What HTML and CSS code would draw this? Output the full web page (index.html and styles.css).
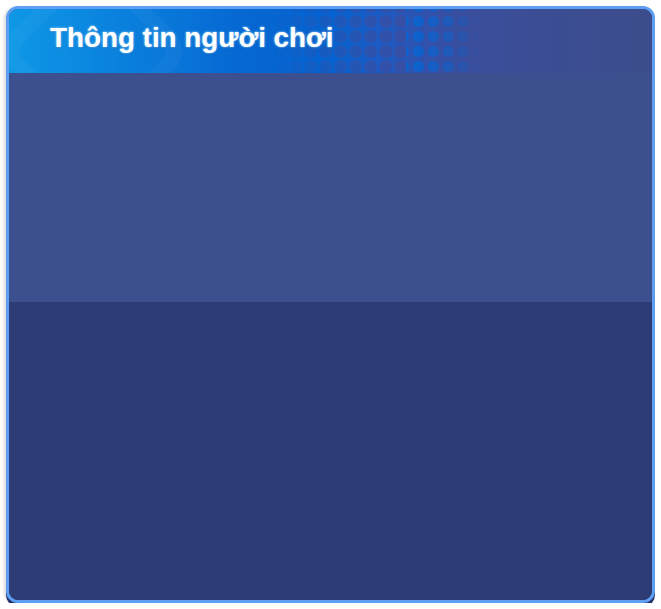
FILE: index.html
```html
<!DOCTYPE html>
<html lang="vi">
<head>
<meta charset="utf-8">
<title>Thông tin người chơi</title>
<link rel="stylesheet" href="styles.css">
</head>
<body>
<div class="panel">
  <div class="panel-header">
    <div class="header-deco"></div>
    <div class="header-dots-a"></div>
    <div class="header-dots-b"></div>
    <h1 class="panel-title">Thông tin người chơi</h1>
  </div>
  <div class="panel-upper"></div>
  <div class="panel-lower"></div>
</div>
</body>
</html>
```
FILE: styles.css
```css
html, body {
  margin: 0;
  padding: 0;
  background: #ffffff;
}
body {
  padding: 6px 6px 0 6px;
}
.panel {
  width: 643px;
  border: 3px solid #5e9ff4;
  border-radius: 12px;
  overflow: hidden;
  background: #2e3c76;
  box-shadow: 0 4px 0 #25316a, -2px 1px 3px rgba(0,0,0,0.15);
  display: flex;
  flex-direction: column;
}
.panel-header {
  position: relative;
  height: 64px;
  overflow: hidden;
  background: linear-gradient(90deg, #0e98e6 0%, #0a82de 16%, #0668d3 36%, #0562d0 50%, #1d5ac4 58%, #3450a8 66%, #3a4e9c 72%, #3b4d92 85%, #3c4c8c 100%);
}
.header-deco {
  position: absolute;
  left: 13px;
  top: -29px;
  width: 110px;
  height: 110px;
  transform: rotate(45deg);
  border-radius: 28px;
  border: 16px solid rgba(255,255,255,0.035);
}
.header-dots-a {
  position: absolute;
  left: 261px;
  top: 0;
  width: 138px;
  height: 64px;
  background-image: radial-gradient(circle, #3a4ea0 0 6px, transparent 7px);
  background-size: 15px 15px;
  background-position: 3px 5px;
  opacity: 0.85;
  -webkit-mask-image: linear-gradient(90deg, transparent 0%, rgba(0,0,0,0.4) 40%, #000 100%);
  mask-image: linear-gradient(90deg, transparent 0%, rgba(0,0,0,0.4) 40%, #000 100%);
}
.header-dots-b {
  position: absolute;
  left: 397px;
  top: 0;
  width: 75px;
  height: 64px;
  background-image: radial-gradient(circle, #0a64d0 0 5px, transparent 6px);
  background-size: 15px 15px;
  background-position: 5px 5px;
  -webkit-mask-image: linear-gradient(90deg, #000 0%, rgba(0,0,0,0.6) 50%, transparent 100%);
  mask-image: linear-gradient(90deg, #000 0%, rgba(0,0,0,0.6) 50%, transparent 100%);
}
.panel-title {
  position: relative;
  margin: 0;
  padding: 13px 0 0 41px;
  font-family: "Liberation Sans", Arial, sans-serif;
  font-weight: bold;
  font-size: 27.8px;
  line-height: 32px;
  color: #ffffff;
  text-shadow: 0 0 2px rgba(140,215,255,0.95), 0 0 3px rgba(120,200,255,0.6), 0 1px 2px rgba(0,50,140,0.5);
}
.panel-upper {
  height: 229px;
  background: #3c4f8f;
}
.panel-lower {
  height: 298px;
  background: #2e3c76;
}
```
